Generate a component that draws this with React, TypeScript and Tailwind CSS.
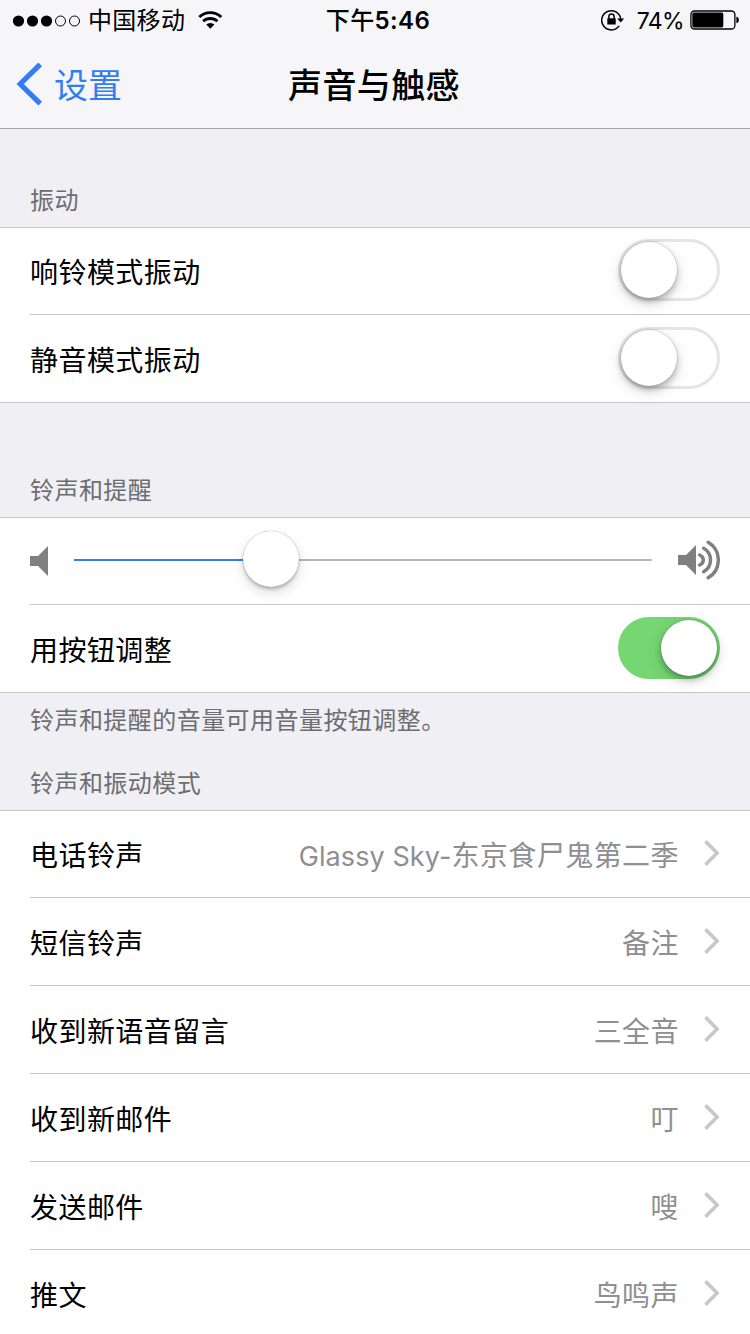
import type { ReactNode } from "react";
import clsx from "clsx";

const ringtones = [
  { label: "电话铃声", latin: "Glassy Sky-", value: "东京食尸鬼第二季" },
  { label: "短信铃声", value: "备注" },
  { label: "收到新语音留言", value: "三全音" },
  { label: "收到新邮件", value: "叮" },
  { label: "发送邮件", value: "嗖" },
  { label: "推文", value: "鸟鸣声" },
];

const StatusBar = () => (
  <div className="grid h-10 grid-cols-[1fr_auto_1fr] items-center pr-[10px] pl-3 text-[24px] leading-10 text-black">
    <div className="flex items-center">
      <svg className="mt-px" width="70" height="12" viewBox="0 0 70 12">
        <circle cx="6.5" cy="6" r="5.6" />
        <circle cx="20.5" cy="6" r="5.6" />
        <circle cx="34.5" cy="6" r="5.6" />
        <circle cx="48.5" cy="6" r="5" fill="none" stroke="#000" />
        <circle cx="62.5" cy="6" r="5" fill="none" stroke="#000" />
      </svg>
      <span className="ml-1.5 pt-0.5 leading-[38px] tracking-[0.3px]">中国移动</span>
      <svg className="ml-[13px]" width="26" height="20" viewBox="0 0 26 20">
        <g fill="none" stroke="#000" strokeWidth="2.8">
          <path d="M1.300 7a16.200 16.200 0 0 1 22 0" />
          <path d="M5.200 11.300a10.400 10.400 0 0 1 14.200 0" />
        </g>
        <path d="M8.200 14.500a6.200 6.200 0 0 1 8.200 0l-4.100 4.300z" />
      </svg>
    </div>
    <div className="pt-0.5 pl-1 leading-[38px] font-medium tracking-[0.4px]">
      下午<span className="font-semibold">5:46</span>
    </div>
    <div className="flex items-center justify-end">
      <svg width="24" height="22" viewBox="0 0 24 22">
        <path
          d="M18.1 16.9a9.6 9.6 0 1 1 1.7-7"
          fill="none"
          stroke="#000"
          strokeWidth="1.5"
        />
        <path d="M16.2 9.6h7l-3.5 4z" />
        <rect x="6.3" y="9.3" width="8.4" height="6.2" />
        <path
          d="M7.9 9.8V7.6a2.6 2.6 0 0 1 5.2 0v2.2"
          fill="none"
          stroke="#000"
          strokeWidth="1.5"
        />
      </svg>
      <span className="ml-3 pt-0.5 text-[23px] leading-[38px] tracking-[-0.6px]">74%</span>
      <svg className="ml-1.5" width="50" height="20" viewBox="0 0 50 20">
        <rect
          x="0.9"
          y="1"
          width="44"
          height="18"
          rx="3.5"
          fill="none"
          stroke="#000"
          strokeWidth="1.3"
        />
        <rect x="2.3" y="2.6" width="31" height="14.8" rx="1.6" />
        <path d="M46.4 6.8c3.3.4 3.3 6 0 6.4z" />
      </svg>
    </div>
  </div>
);

const NavBar = () => (
  <div className="grid h-[88px] grid-cols-[1fr_auto_1fr] items-center pr-[18px] pl-4 text-[34px] leading-[86px]">
    <div className="flex items-center text-[#347cf7]">
      <svg width="27" height="44" viewBox="0 0 27 44">
        <path
          d="M24.200 2.400 4.200 22 24.200 41.600"
          fill="none"
          stroke="currentColor"
          strokeWidth="5.2"
        />
      </svg>
      <span className="ml-[11px] pt-1 leading-[84px]">设置</span>
    </div>
    <h1 className="pt-1 leading-[84px] font-medium tracking-[0.4px]">声音与触感</h1>
  </div>
);

const SectionText = ({ className, children }: { className: string; children: ReactNode }) => (
  <div
    className={clsx(
      "flex items-end pl-[30px] text-[24px] leading-[34px] tracking-[0.45px] text-[#6d6d72]",
      className,
    )}
  >
    {children}
  </div>
);

const Group = ({ children }: { children: ReactNode }) => (
  <div className="border-y border-[#c8c7cc] bg-white pl-[30px]">{children}</div>
);

const Row = ({ first, last, children }: { first?: boolean; last?: boolean; children: ReactNode }) => (
  <div
    className={clsx(
      "flex items-center pr-[30px]",
      first || last ? "h-[87px]" : "h-[88px]",
      !last && "border-b border-[#c8c7cc]",
    )}
  >
    {children}
  </div>
);

const Label = ({ children }: { children: ReactNode }) => (
  <span className="pt-1 text-[28px] leading-10 tracking-[0.45px] text-black">{children}</span>
);

const Switch = ({ on }: { on?: boolean }) => (
  <div
    className={clsx(
      "mb-0.5 ml-auto flex h-[62px] w-[102px] rounded-full border-[3px]",
      on ? "justify-end border-[#76d672] bg-[#76d672]" : "border-[#e5e5e5] bg-white",
    )}
  >
    <div className="size-14 rounded-full bg-white shadow-[0_5px_18px_rgba(0,0,0,0.12),0_4px_6px_rgba(0,0,0,0.25),0_0_2px_rgba(0,0,0,0.25)]" />
  </div>
);

const Slider = ({ value }: { value: number }) => (
  <div className="relative mx-[26px] mb-0.5 h-0.5 flex-1 rounded-full bg-[#b7b7b7]">
    <div className="h-0.5 bg-[#347cf7]" style={{ width: `${value}%` }} />
    <div
      className="absolute -top-7 size-14 -translate-x-1/2 rounded-full bg-white shadow-[0_6px_14px_rgba(0,0,0,0.13),0_3px_3px_rgba(0,0,0,0.18),0_0_1px_rgba(0,0,0,0.45)]"
      style={{ left: `${value}%` }}
    />
  </div>
);

const Chevron = () => (
  <svg className="mb-0.5 ml-[25px] shrink-0" width="16" height="28" viewBox="0 0 16 28">
    <path d="M1.500 2.200 13.100 14 1.500 25.800" fill="none" stroke="#c7c7cc" strokeWidth="3.6" />
  </svg>
);

const App = () => (
  <div
    lang="zh-CN"
    className="h-[1334px] w-[750px] overflow-hidden bg-[#efeff4] font-['Inter','Noto_Sans_CJK_SC',sans-serif] whitespace-nowrap"
  >
    <header className="border-b border-[#a7a7aa] bg-[#f6f6f8]">
      <StatusBar />
      <NavBar />
    </header>

    <SectionText className="h-[98px] pb-[9px]">振动</SectionText>
    <Group>
      <Row first>
        <Label>响铃模式振动</Label>
        <Switch />
      </Row>
      <Row last>
        <Label>静音模式振动</Label>
        <Switch />
      </Row>
    </Group>

    <SectionText className="h-[114px] pb-[9px]">铃声和提醒</SectionText>
    <Group>
      <Row first>
        <svg width="18" height="30" viewBox="0 0 18 30" fill="#808080">
          <path d="M0 10h8L18 0v30L8 20H0z" />
        </svg>
        <Slider value={34.1} />
        <svg className="mb-0.5" width="42" height="42" viewBox="0 0 42 42" fill="#808080">
          <path d="M0 16h8L18 6v30L8 26H0z" />
          <g fill="none" stroke="#808080" strokeWidth="3.4" strokeLinecap="round">
            <path d="M21.600 16c5 2 5 8 0 10" />
            <path d="M25.600 9.300c9.200 5 9.200 18.400 0 23.400" />
            <path d="M30.200 3.200c13.500 8 13.500 27.600 0 35.600" />
          </g>
        </svg>
      </Row>
      <Row last>
        <Label>用按钮调整</Label>
        <Switch on />
      </Row>
    </Group>

    <SectionText className="h-[45px]">铃声和提醒的音量可用音量按钮调整。</SectionText>
    <SectionText className="h-[72px] pb-[9px]">铃声和振动模式</SectionText>
    <Group>
      {ringtones.map(({ label, latin, value }, i) => (
        <Row key={label} first={i === 0}>
          <Label>{label}</Label>
          <span className="ml-auto pt-1 text-[28px] leading-10 tracking-[0.45px] text-[#8e8e93]">
            {latin && <span className="text-[27px] tracking-[0.08px]">{latin}</span>}
            {value}
          </span>
          <Chevron />
        </Row>
      ))}
    </Group>
  </div>
);

export default App;
